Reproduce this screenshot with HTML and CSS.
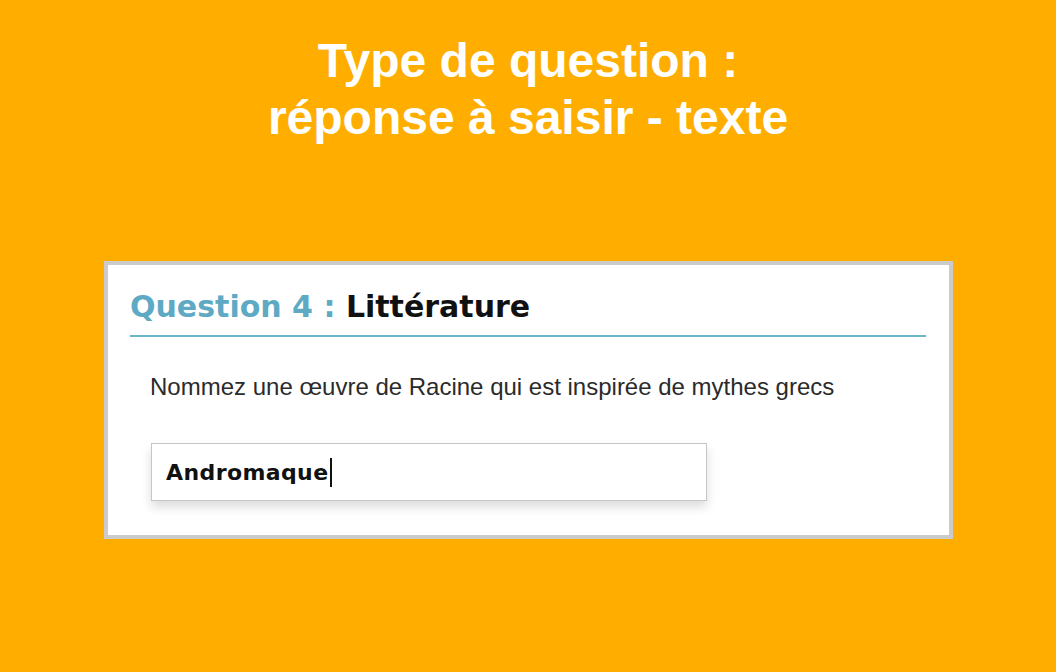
FILE: index.html
```html
<!DOCTYPE html>
<html lang="fr">

<head>
    <meta charset="UTF-8">
    <meta name="viewport" content="width=device-width, initial-scale=1.0">
    <title>Type de question : réponse à saisir - texte</title>
    <link rel="stylesheet" href="styles.css">
</head>

<body>
    <header class="slide-title">
        <h1>
            <span class="title-line">Type de question :</span>
            <span class="title-line">réponse à saisir - texte</span>
        </h1>
    </header>

    <section class="question-card">
        <h2 class="question-heading">
            <span class="question-number">Question 4 :</span>
            <span class="question-topic">Littérature</span>
        </h2>
        <p class="question-text">Nommez une œuvre de Racine qui est inspirée de mythes grecs</p>
        <div class="answer-box">
            <span class="answer-value">Andromaque</span><span class="caret"></span>
        </div>
    </section>
</body>

</html>
```

FILE: styles.css
```css
body {
    margin: 0;
    background: #ffae00;
    font-family: "Liberation Sans", Arial, sans-serif;
}

.slide-title {
    padding-top: 32px;
    text-align: center;
    color: #fff;
}

.slide-title h1 {
    margin: 0;
    font-size: 48px;
    line-height: 57px;
    font-weight: bold;
}

.title-line {
    display: block;
}

.question-card {
    margin: 115px 0 0 104px;
    width: 841px;
    height: 270px;
    box-sizing: content-box;
    background: #fff;
    border: 4px solid #cbcbcb;
    padding: 0;
    display: flex;
    flex-direction: column;
}

.question-heading {
    margin: 22px 23px 0 22px;
    padding-bottom: 8px;
    border-bottom: 2px solid #6db5cb;
    font-family: "DejaVu Sans", sans-serif;
    font-size: 30px;
    line-height: 40px;
    font-weight: bold;
}

.question-number {
    color: #5eaac4;
}

.question-topic {
    color: #111;
}

.question-text {
    margin: 36px 0 0 42px;
    font-size: 24px;
    line-height: 28px;
    color: #2b2b2b;
}

.answer-box {
    margin: 42px 0 0 43px;
    width: 540px;
    height: 56px;
    border: 1px solid #c6c6c6;
    box-shadow: 0 6px 10px rgba(0, 0, 0, 0.14);
    display: flex;
    align-items: center;
    padding-left: 14px;
    box-sizing: content-box;
}

.answer-value {
    font-family: "DejaVu Sans", sans-serif;
    font-weight: bold;
    font-size: 22px;
    letter-spacing: 0.4px;
    color: #111;
}

.caret {
    width: 2px;
    height: 29px;
    background: #111;
    margin-left: 1px;
}
```
